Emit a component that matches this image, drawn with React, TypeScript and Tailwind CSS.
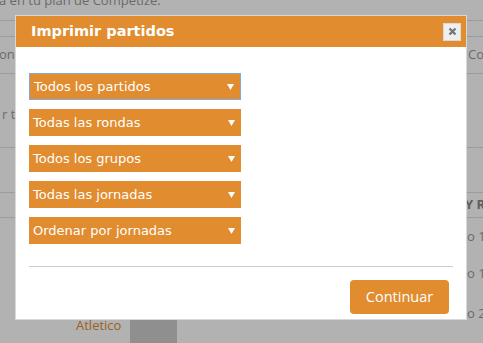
import { useState } from "react";

const filters = [
  "Todos los partidos",
  "Todas las rondas",
  "Todos los grupos",
  "Todas las jornadas",
  "Ordenar por jornadas",
];

function SelectBox({ label, focused }: { label: string; focused?: boolean }) {
  return (
    <div
      className={`flex h-[27px] w-[212px] items-center justify-between bg-[#e18c2f] pl-[4px] pr-[6px] text-[13px] text-white ${
        focused ? "border border-[#84a8e0] pl-[3px] pr-[5px]" : ""
      }`}
    >
      <span className="whitespace-nowrap">{label}</span>
      <svg width="7" height="6" viewBox="0 0 7 6">
        <path d="M0 0h7L3.5 6z" fill="#fff" />
      </svg>
    </div>
  );
}

export default function App() {
  const [selected] = useState(0);

  return (
    <div className="relative h-[343px] w-[483px] overflow-hidden bg-white font-['Open_Sans',sans-serif] text-[13px] text-[#999]">
      {/* Page behind the modal */}
      <div className="flex h-[21px] items-start border-b border-[#e0e0e0]">
        <span className="-mt-[9px] -ml-[1px] whitespace-nowrap">
          a en tu plan de Competize.
        </span>
      </div>
      <div className="h-[16px] border-b border-[#e0e0e0]" />
      <div className="flex h-[37px] items-center justify-between border-b border-[#e0e0e0]">
        <span className="-ml-[1px] whitespace-nowrap">ones</span>
        <span className="w-[15px] whitespace-nowrap">Co</span>
      </div>
      <div className="flex h-[74px] items-end border-b border-[#e0e0e0] pb-[23px]">
        <span className="ml-[2px] whitespace-nowrap">r to</span>
      </div>
      <div className="h-[45px] border-b border-[#e0e0e0]" />
      <div className="flex h-[25px] items-center justify-end border-b border-[#e0e0e0]">
        <span className="w-[18px] whitespace-nowrap font-bold text-[#888]">Y R</span>
      </div>
      <div className="flex h-[37px] items-center justify-end">
        <span className="w-[16px] whitespace-nowrap">o 1</span>
      </div>
      <div className="flex h-[37px] items-center justify-end">
        <span className="w-[16px] whitespace-nowrap">o 1</span>
      </div>
      <div className="flex">
        <span className="ml-[76px] mt-[24px] w-[54px] whitespace-nowrap text-[#e18c2f]">
          Atletico
        </span>
        <div className="mt-[8px] h-[60px] w-[47px] bg-[#cdcdcd]" />
        <span className="ml-auto mt-[12px] w-[16px] whitespace-nowrap">o 2</span>
      </div>

      {/* Backdrop */}
      <div className="absolute inset-0 bg-black/30" />

      {/* Modal */}
      <div className="absolute left-[15px] top-[15px] flex h-[305px] w-[452px] flex-col border border-[#d8d8d8] bg-white">
        <div className="flex h-[31px] items-center justify-between bg-[#e18c2f] pl-[15px] pr-[5px]">
          <h2 className="font-['DejaVu_Sans',sans-serif] text-[14.5px] font-bold text-white">
            Imprimir partidos
          </h2>
          <button className="flex h-[18px] w-[18px] items-center justify-center border border-[#dadada] bg-[#efefef]">
            <svg width="9" height="9" viewBox="0 0 9 9">
              <path d="M1.5 1.5l6 6M7.5 1.5l-6 6" stroke="#777" strokeWidth="2.4" />
            </svg>
          </button>
        </div>

        <div className="flex flex-col gap-[9px] pl-[13px] pt-[26px] font-['DejaVu_Sans',sans-serif]">
          {filters.map((f, i) => (
            <SelectBox key={f} label={f} focused={i === selected} />
          ))}
        </div>

        <div className="mx-[13px] mt-[22px] border-t border-[#cfcfcf]" />

        <div className="flex justify-end pr-[17px] pt-[13px]">
          <button className="h-[34px] w-[99px] rounded-[4px] bg-[#e18c2f] text-[14.5px] text-white">
            Continuar
          </button>
        </div>
      </div>
    </div>
  );
}
